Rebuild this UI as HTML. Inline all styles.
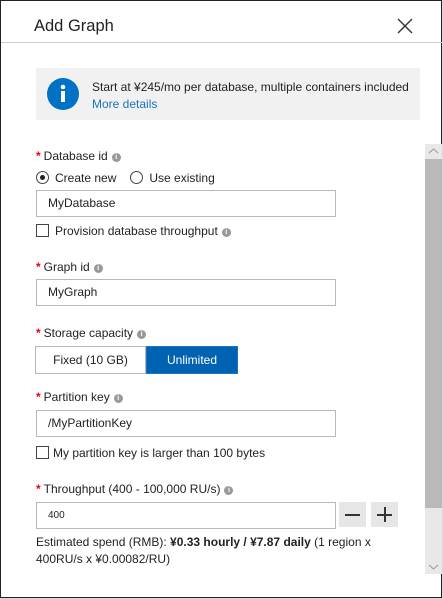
<!DOCTYPE html>
<html><head><meta charset="utf-8"><style>
*{box-sizing:border-box;margin:0;padding:0}
body{width:443px;height:599px;background:#d8d8d8;font-family:"Liberation Sans",sans-serif;font-size:12px;color:#222;position:relative;overflow:hidden}
#p{position:absolute;left:0;top:0;width:442px;height:598px;background:#fff;border:1px solid #222;}
.a{position:absolute}
.hdr{left:33px;top:16px;font-size:16.5px;color:#222}
.hl{left:0;top:41px;width:441px;height:1px;background:#ccc}
.info{left:35px;top:67px;width:384px;height:52px;background:#f1f1f1}
.lbl{font-size:12px;color:#222}
.req{color:#e00;font-weight:bold;margin-right:3px}
.i{display:inline-block;width:9px;height:9px;border-radius:50%;background:#999;color:#fff;font-size:7px;line-height:9px;text-align:center;font-weight:bold;vertical-align:1px;margin-left:4px}
.inp{width:300px;height:27px;border:1px solid #b8b8b8;padding-left:11px;line-height:25px;font-size:12px}
.cb{display:inline-block;width:13px;height:13px;border:1px solid #444;vertical-align:-2px;margin-right:6px}
.rb{display:inline-block;width:13px;height:13px;border:1px solid #444;border-radius:50%;vertical-align:-2px;margin-right:6px;position:relative}
</style></head><body>
<div id="p">
<div class="a hdr">Add Graph</div>
<svg class="a" style="left:396px;top:17px" width="16" height="16"><path d="M1 1L15 15M15 1L1 15" stroke="#333" stroke-width="1.4"/></svg>
<div class="a hl"></div>
<div class="a info">
 <svg class="a" style="left:11px;top:10px" width="32" height="32"><circle cx="16" cy="16" r="16" fill="#0072c6"/><circle cx="16" cy="9" r="2.3" fill="#fff"/><rect x="14" y="13" width="4" height="11" fill="#fff"/></svg>
 <div class="a" style="left:56px;top:12px;white-space:nowrap">Start at ¥245/mo per database, multiple containers included</div>
 <div class="a" style="left:56px;top:29px;color:#1b75bc">More details</div>
</div>
<div class="a lbl" style="left:35px;top:148px"><span class="req">*</span>Database id<span class="i">i</span></div>
<div class="a lbl" style="left:35px;top:170px"><span class="rb"><span style="position:absolute;left:3px;top:3px;width:5px;height:5px;border-radius:50%;background:#222"></span></span>Create new<span style="margin-left:14px" class="rb"></span>Use existing</div>
<div class="a inp" style="left:35px;top:189px">MyDatabase</div>
<div class="a lbl" style="left:35px;top:223px"><span class="cb"></span>Provision database throughput<span class="i">i</span></div>
<div class="a lbl" style="left:35px;top:259px"><span class="req">*</span>Graph id<span class="i">i</span></div>
<div class="a inp" style="left:35px;top:278px">MyGraph</div>
<div class="a lbl" style="left:35px;top:325px"><span class="req">*</span>Storage capacity<span class="i">i</span></div>
<div class="a" style="left:34px;top:345px;width:111px;height:28px;border:1px solid #b8b8b8;text-align:center;line-height:26px">Fixed (10 GB)</div>
<div class="a" style="left:145px;top:345px;width:92px;height:28px;background:#0063b1;border:1px solid #1a74c8;color:#fff;text-align:center;line-height:26px">Unlimited</div>
<div class="a lbl" style="left:35px;top:389px"><span class="req">*</span>Partition key<span class="i">i</span></div>
<div class="a inp" style="left:35px;top:409px">/MyPartitionKey</div>
<div class="a lbl" style="left:35px;top:445px"><span class="cb" style="margin-right:4px"></span>My partition key is larger than 100 bytes</div>
<div class="a lbl" style="left:35px;top:481px"><span class="req">*</span>Throughput (400 - 100,000 RU/s)<span class="i">i</span></div>
<div class="a inp" style="left:35px;top:501px;font-size:10px">400</div>
<div class="a" style="left:338px;top:501px;width:27px;height:25px;background:#e6e6e6"><div style="position:absolute;left:6px;top:12px;width:15px;height:2px;background:#333"></div></div>
<div class="a" style="left:370px;top:501px;width:27px;height:25px;background:#e6e6e6"><div style="position:absolute;left:6px;top:12px;width:15px;height:2px;background:#333"></div><div style="position:absolute;left:12.5px;top:5px;width:2px;height:15px;background:#333"></div></div>
<div class="a" style="left:35px;top:533px;width:380px;line-height:17px">Estimated spend (RMB): <b>¥0.33 hourly / ¥7.87 daily</b> (1 region x 400RU/s x ¥0.00082/RU)</div>
<div class="a" style="left:424px;top:143px;width:17px;height:430px;background:#e8e8e8"></div>
<div class="a" style="left:424px;top:158px;width:17px;height:349px;background:#b9b9b9"></div>
<svg class="a" style="left:427px;top:146px" width="11" height="8"><path d="M1 6L5.5 2L10 6" stroke="#999" fill="none"/></svg>
<svg class="a" style="left:427px;top:562px" width="11" height="8"><path d="M1 2L5.5 6L10 2" stroke="#999" fill="none"/></svg>
</div>
</body></html>
